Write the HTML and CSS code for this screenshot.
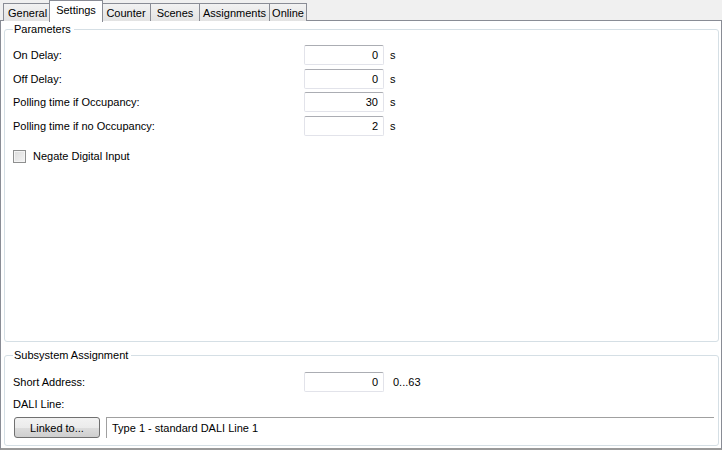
FILE: index.html
```html
<!DOCTYPE html>
<html>
<head>
<meta charset="utf-8">
<link rel="stylesheet" href="styles.css">
</head>
<body>
<div class="window">
  <div class="tabs">
    <div class="tab t-general">General</div>
    <div class="tab active t-settings">Settings</div>
    <div class="tab t-counter">Counter</div>
    <div class="tab t-scenes">Scenes</div>
    <div class="tab t-assign">Assignments</div>
    <div class="tab t-online">Online</div>
  </div>
  <div class="pane">
    <fieldset class="group params">
      <legend>Parameters</legend>
      <div class="row">
        <span class="label">On Delay:</span>
        <span class="field">0</span>
        <span class="unit">s</span>
      </div>
      <div class="row">
        <span class="label">Off Delay:</span>
        <span class="field">0</span>
        <span class="unit">s</span>
      </div>
      <div class="row">
        <span class="label">Polling time if Occupancy:</span>
        <span class="field">30</span>
        <span class="unit">s</span>
      </div>
      <div class="row">
        <span class="label">Polling time if no Occupancy:</span>
        <span class="field">2</span>
        <span class="unit">s</span>
      </div>
      <div class="check">
        <span class="box"></span>
        <span class="check-label">Negate Digital Input</span>
      </div>
    </fieldset>
    <fieldset class="group subsystem">
      <legend>Subsystem Assignment</legend>
      <div class="row">
        <span class="label">Short Address:</span>
        <span class="field">0</span>
        <span class="unit range">0...63</span>
      </div>
      <div class="dali-label">DALI Line:</div>
      <div class="dali-row">
        <span class="button">Linked to...</span>
        <span class="dali-field">Type 1 - standard DALI Line 1</span>
      </div>
    </fieldset>
  </div>
</div>
</body>
</html>
```
FILE: styles.css
```css
html, body {
  margin: 0;
  padding: 0;
}
body {
  background: #f0f0f0;
  font-family: "Liberation Sans", Arial, sans-serif;
  font-size: 11px;
  color: #000;
  width: 722px;
  height: 450px;
  overflow: hidden;
}
.window {
  display: flex;
  flex-direction: column;
  height: 450px;
}
.tabs {
  display: flex;
  align-items: flex-end;
  height: 21px;
  padding-left: 3px;
  position: relative;
  z-index: 2;
}
.tab {
  box-sizing: border-box;
  height: 18px;
  border: 1px solid #898c95;
  border-right: none;
  border-bottom: none;
  background: linear-gradient(#f2f2f2, #e3e3e3);
  display: flex;
  align-items: center;
  justify-content: center;
  padding-top: 1px;
}
.tab.t-online { border-right: 1px solid #898c95; }
.tab.t-general { width: 48px; justify-content: flex-start; padding-left: 4px; }
.tab.t-counter { width: 48px; }
.tab.t-scenes { width: 49px; }
.tab.t-assign { width: 70px; }
.tab.t-online { width: 38px; }
.tab.active {
  width: 54px;
  height: 22px;
  margin: 0 -1px 0 -2px;
  background: #fff;
  border: 1px solid #898c95;
  border-bottom: none;
  position: relative;
  top: 1px;
  padding-top: 0;
  padding-bottom: 3px;
}
.tab.active + .tab { border-left: none; }
.tab.t-counter { border-left: 1px solid #898c95; }
.pane {
  flex: 1;
  box-sizing: border-box;
  margin-top: -1px;
  background: #fff;
  border: 1px solid #898c95;
  border-bottom: 2px solid #9a9a9a;
  display: flex;
  flex-direction: column;
  padding: 2px 2px 2px 3px;
  gap: 7px;
}
.group {
  margin: 0;
  border: 1px solid #d5dfe5;
  border-radius: 3px;
  padding: 0 0 0 8px;
  min-width: 0;
}
.group legend {
  padding: 0 3px 0 1px;
  margin-left: 0;
  line-height: 13px;
}
.params {
  flex: 1;
  padding-top: 9px;
}
.subsystem {
  height: 97px;
  flex-shrink: 0;
  box-sizing: border-box;
  padding-top: 10px;
}
.row {
  display: flex;
  align-items: center;
  height: 20px;
  margin-bottom: 3.6px;
}
.label {
  width: 291px;
}
.field {
  box-sizing: border-box;
  width: 80px;
  height: 20px;
  border: 1px solid #e2e3ea;
  border-top-color: #abadb3;
  border-radius: 2px;
  text-align: right;
  padding-right: 5px;
  line-height: 18px;
}
.unit {
  margin-left: 6px;
}
.range {
  margin-left: 9px;
}
.check {
  display: flex;
  align-items: center;
  margin-top: 14px;
}
.box {
  box-sizing: border-box;
  width: 13px;
  height: 13px;
  border: 1px solid #8e8f8f;
  background: linear-gradient(135deg, #dcdcdc, #f4f4f4);
  box-shadow: inset 0 0 0 1px #f4f4f4;
  margin-right: 7px;
}
.dali-label {
  margin-top: 5px;
  height: 15px;
  line-height: 15px;
}
.dali-row {
  display: flex;
  align-items: stretch;
  margin-top: 5px;
  margin-right: 4px;
  height: 21px;
}
.button {
  box-sizing: border-box;
  width: 86px;
  border: 1px solid #707070;
  border-radius: 3px;
  background: linear-gradient(#f2f2f2 0%, #ebebeb 50%, #dddddd 51%, #cfcfcf 100%);
  display: flex;
  align-items: center;
  justify-content: center;
  margin-left: 1px;
}
.dali-field {
  flex: 1;
  margin-left: 6px;
  border-top: 1px solid #a0a0a0;
  border-left: 1px solid #a0a0a0;
  padding-left: 5px;
  display: flex;
  align-items: center;
}
```
